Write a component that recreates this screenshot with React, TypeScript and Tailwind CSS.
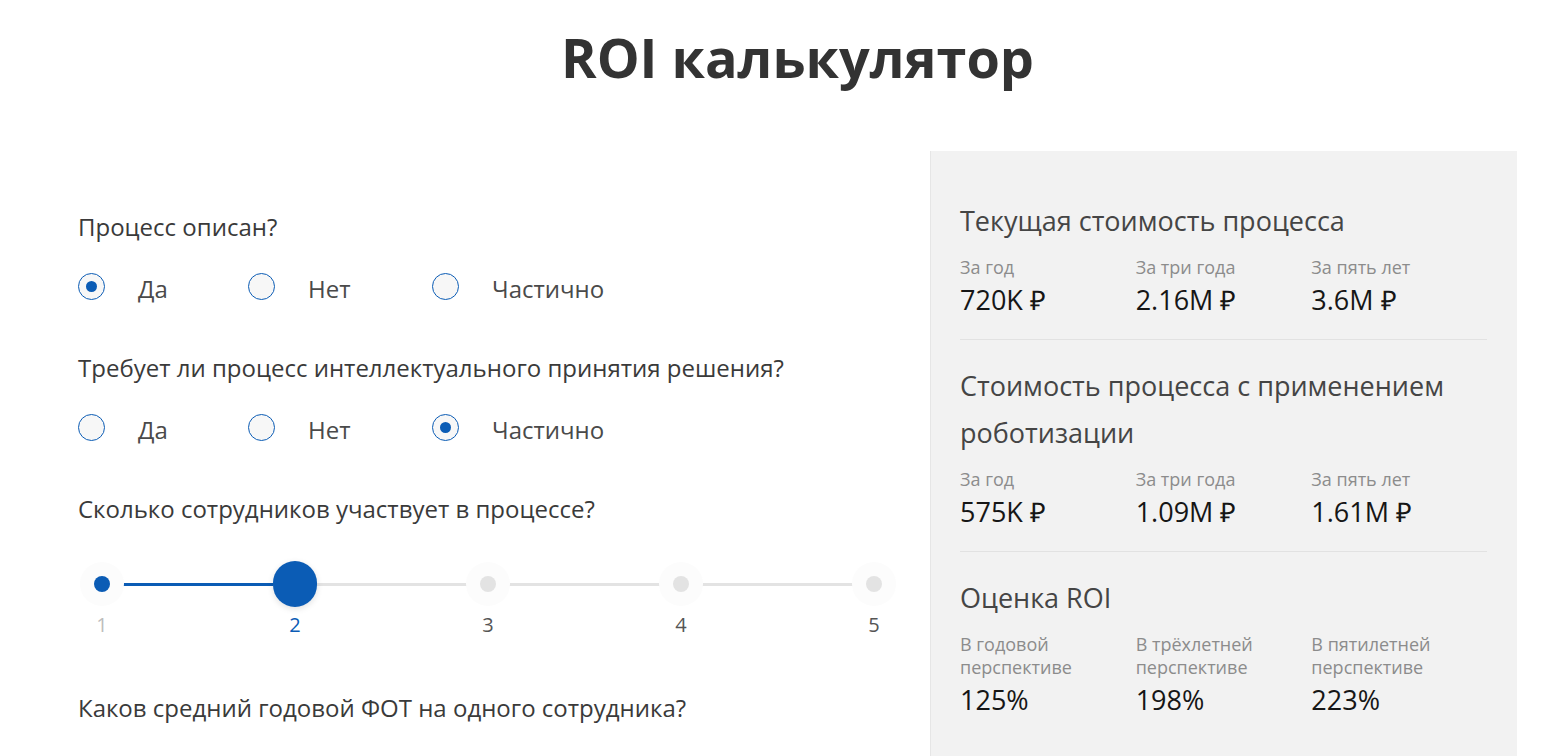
import { useState } from 'react';

const Radio = ({ label, checked, onClick }: { label: string; checked: boolean; onClick: () => void }) => (
    <button onClick={onClick} className="flex items-center h-[30px] text-left">
        <span className="w-[27px] h-[27px] rounded-full border border-[#0b5cb5] bg-[#f7f7f7] flex items-center justify-center shrink-0">
            {checked && <span className="w-[11px] h-[11px] rounded-full bg-[#0b5cb5]" />}
        </span>
        <span className="ml-[33px] mt-[6px] text-[24px] text-[#4a4a4a]">{label}</span>
    </button>
);

const RadioGroup = ({ value, onChange }: { value: string; onChange: (v: string) => void }) => {
    const opts = ['Да', 'Нет', 'Частично'];
    return (
        <div className="flex mt-[29px]">
            {opts.map((o, i) => (
                <div key={o} className={i === 0 ? 'w-[170px]' : i === 1 ? 'w-[184px]' : ''}>
                    <Radio label={o} checked={value === o} onClick={() => onChange(o)} />
                </div>
            ))}
        </div>
    );
};

const Question = ({ children }: { children: React.ReactNode }) => (
    <p className="text-[24px] leading-[30px] text-[#3a3a3a]">{children}</p>
);

const Slider = ({ value, onChange }: { value: number; onChange: (v: number) => void }) => {
    const steps = [1, 2, 3, 4, 5];
    return (
        <div className="mt-[36px] w-[820px]">
            <div className="relative h-[48px] mx-[24px]">
                <div className="absolute left-0 right-0 top-[22.5px] h-[3px] bg-[#e3e3e3]" />
                <div
                    className="absolute left-0 top-[22.5px] h-[3px] bg-[#0b5cb5]"
                    style={{ width: `${((value - 1) / 4) * 100}%` }}
                />
                {steps.map((s, i) => (
                    <button
                        key={s}
                        onClick={() => onChange(s)}
                        className="absolute top-1/2 -translate-x-1/2 -translate-y-1/2 w-[44px] h-[44px] rounded-full bg-[#fcfcfc] flex items-center justify-center"
                        style={{ left: `${(i / 4) * 100}%` }}
                    >
                        {s === value ? (
                            <span className="w-[46px] h-[46px] rounded-full bg-[#0b5cb5] shadow-[0_2px_6px_rgba(0,0,0,0.12)]" />
                        ) : (
                            <span className={`w-[16px] h-[16px] rounded-full ${s < value ? 'bg-[#0b5cb5]' : 'bg-[#e3e3e3]'}`} />
                        )}
                    </button>
                ))}
            </div>
            <div className="flex justify-between mx-[16px] mt-[5px] text-[20px] leading-[24px]">
                {steps.map(s => (
                    <span
                        key={s}
                        className={`w-[16px] text-center ${s === value ? 'text-[#0b5cb5]' : s < value ? 'text-[#bdbdbd]' : 'text-[#555]'}`}
                    >
                        {s}
                    </span>
                ))}
            </div>
        </div>
    );
};

const Stat = ({ label, value }: { label: string; value: string }) => (
    <div className="w-[176px]">
        <div className="text-[18px] leading-[23px] text-[#8c8c8c]">{label}</div>
        <div className="mt-[5px] text-[27px] leading-[32px] text-[#161616]">{value}</div>
    </div>
);

const Section = ({ title, stats, last }: { title: string; stats: [string, string][]; last?: boolean }) => (
    <div className={last ? '' : 'border-b border-[#e2e2e2] pb-[23px] mb-[22px]'}>
        <h3 className="text-[27px] leading-[47px] text-[#454545]">{title}</h3>
        <div className="flex mt-[12px]">
            {stats.map(([l, v]) => (
                <Stat key={l} label={l} value={v} />
            ))}
        </div>
    </div>
);

export default function App() {
    const [q1, setQ1] = useState('Да');
    const [q2, setQ2] = useState('Частично');
    const [emp, setEmp] = useState(2);

    return (
        <div className="min-h-screen bg-white font-['Open_Sans',sans-serif] overflow-hidden">
            <div className="ml-[78px] w-[1439px]">
                <h1 className="pt-[24px] text-center text-[54px] leading-[67px] font-bold text-[#333]">ROI калькулятор</h1>
                <div className="flex mt-[60px]">
                    <div className="w-[852px] pt-[61px]">
                        <Question>Процесс описан?</Question>
                        <RadioGroup value={q1} onChange={setQ1} />
                        <div className="mt-[52px]">
                            <Question>Требует ли процесс интеллектуального принятия решения?</Question>
                        </div>
                        <RadioGroup value={q2} onChange={setQ2} />
                        <div className="mt-[52px]">
                            <Question>Сколько сотрудников участвует в процессе?</Question>
                        </div>
                        <Slider value={emp} onChange={setEmp} />
                        <div className="mt-[56px]">
                            <Question>Каков средний годовой ФОТ на одного сотрудника?</Question>
                        </div>
                    </div>
                    <div className="w-[587px] bg-[#f2f2f2] border-l border-[#e6e6e6] pl-[29px] pr-[30px] pt-[46px] pb-[60px] min-h-[620px]">
                        <Section
                            title="Текущая стоимость процесса"
                            stats={[
                                ['За год', '720K ₽'],
                                ['За три года', '2.16M ₽'],
                                ['За пять лет', '3.6M ₽'],
                            ]}
                        />
                        <Section
                            title="Стоимость процесса с применением роботизации"
                            stats={[
                                ['За год', '575K ₽'],
                                ['За три года', '1.09M ₽'],
                                ['За пять лет', '1.61M ₽'],
                            ]}
                        />
                        <Section
                            last
                            title="Оценка ROI"
                            stats={[
                                ['В годовой перспективе', '125%'],
                                ['В трёхлетней перспективе', '198%'],
                                ['В пятилетней перспективе', '223%'],
                            ]}
                        />
                    </div>
                </div>
            </div>
        </div>
    );
}
